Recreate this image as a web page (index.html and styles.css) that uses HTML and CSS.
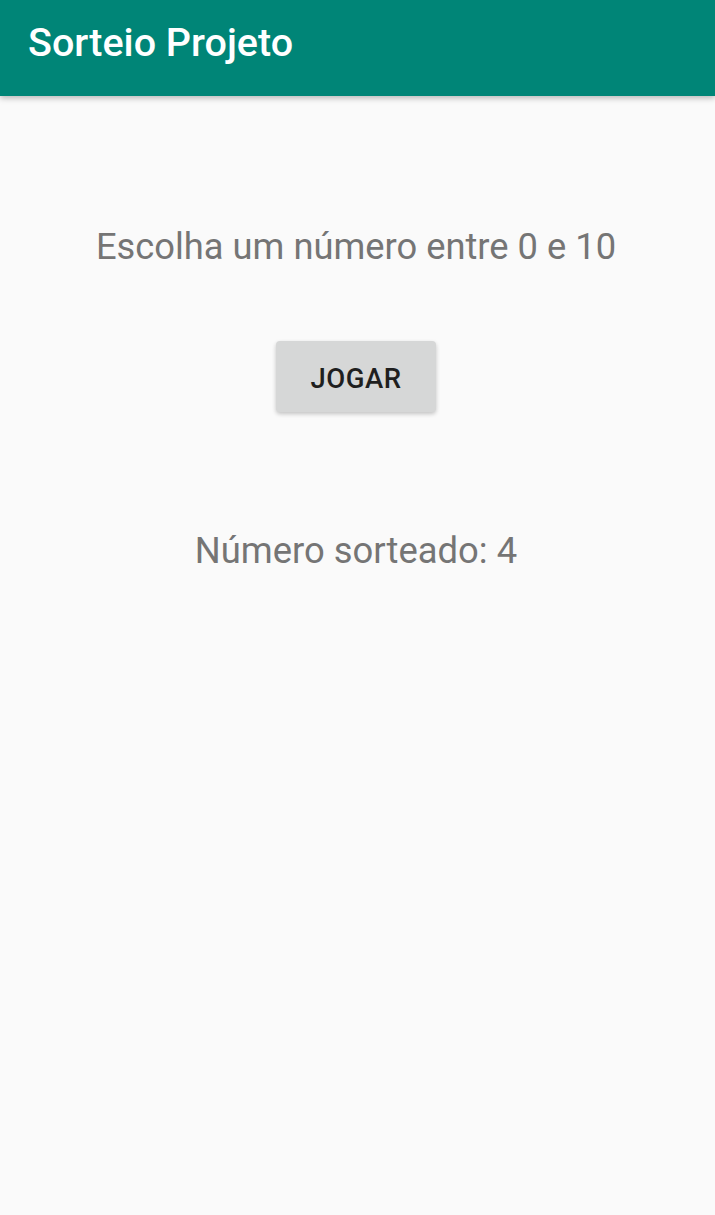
FILE: index.html
```html
<!DOCTYPE html>
<html lang="pt">
<head>
<meta charset="utf-8">
<title>Sorteio Projeto</title>
<link rel="stylesheet" href="styles.css">
</head>
<body>
<header class="appbar">
  <h1 class="appbar-title">Sorteio Projeto</h1>
</header>
<main class="content">
  <p class="prompt">Escolha um número entre 0 e 10</p>
  <button class="play-btn" type="button">JOGAR</button>
  <p class="result">Número sorteado: 4</p>
</main>
</body>
</html>
```

FILE: styles.css
```css
html, body {
  margin: 0;
  padding: 0;
}
body {
  background: #fafafa;
  font-family: Roboto, "Noto Sans", sans-serif;
  width: 715px;
  height: 1215px;
  overflow: hidden;
}
.appbar {
  height: 96px;
  box-sizing: border-box;
  background: #008577;
  display: flex;
  align-items: flex-start;
  padding: 23px 0 0 28px;
  box-shadow: 0 2px 6px rgba(0, 0, 0, 0.28);
  position: relative;
  z-index: 1;
}
.appbar-title {
  margin: 0;
  color: #ffffff;
  font-size: 39.5px;
  font-weight: 500;
  line-height: 40px;
}
.content {
  display: flex;
  flex-direction: column;
  align-items: center;
  padding-right: 3px;
}
.prompt {
  margin: 127px 0 0;
  font-size: 36.3px;
  line-height: 48px;
  color: #757575;
}
.play-btn {
  margin: 70px 0 0;
  width: 160px;
  height: 71px;
  border: none;
  border-radius: 4px;
  background: #d6d7d7;
  box-shadow: 0 2px 4px rgba(0, 0, 0, 0.22);
  font-family: Roboto, sans-serif;
  font-weight: 500;
  font-size: 27.5px;
  letter-spacing: 0.5px;
  color: #1f1f1f;
  padding: 4px 0 0;
}
.result {
  margin: 115px 0 0;
  font-size: 36.4px;
  line-height: 48px;
  color: #757575;
}
```
